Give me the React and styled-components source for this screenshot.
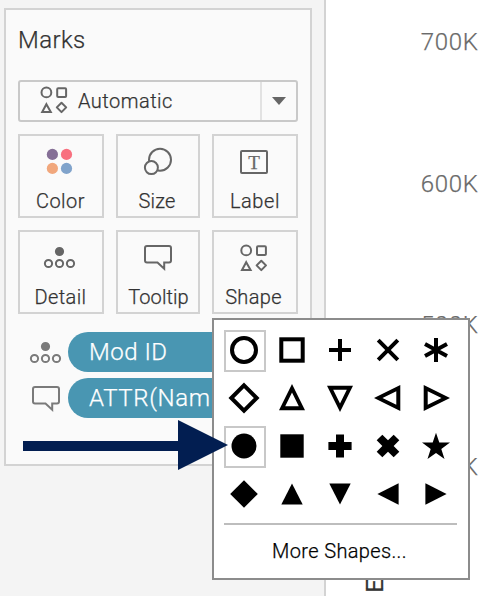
import React from "react";
import styled, { createGlobalStyle } from "styled-components";

const GlobalStyle = createGlobalStyle`
  *, *::before, *::after { box-sizing: border-box; }
  body { margin: 0; background: #fff; overflow: hidden; }
  button { font: inherit; color: inherit; background: none; padding: 0; margin: 0; border: 0; }
`;

const Page = styled.div`
  position: relative;
  display: flex;
  width: 481px;
  height: 596px;
  overflow: hidden;
  background: #fff;
  color: #323232;
  font-family: Roboto, "Liberation Sans", sans-serif;
  font-size: 20px;
  font-weight: 300;
  -webkit-text-stroke-width: 0.25px;
`;

const Sidebar = styled.aside`
  flex: none;
  width: 326px;
  padding: 8px 12px 0 4px;
  background: #f4f4f4;
  border-right: 2px solid #d3d3d3;
`;

const Card = styled.section`
  display: flex;
  flex-direction: column;
  width: 308px;
  height: 458px;
  padding: 14px 12px 0;
  border: 2px solid #d3d3d3;
  background: #fafafa;
`;

const Title = styled.h1`
  margin: 0 0 24px;
  font-size: 24px;
  font-weight: 300;
  line-height: 32px;
  letter-spacing: 0.4px;
`;

const Select = styled.button`
  display: flex;
  align-items: stretch;
  height: 42px;
  border: 2px solid #c9c9c9;
  border-radius: 3px;
  line-height: 38px;
  letter-spacing: 0.48px;
  text-align: left;
`;

const SelectValue = styled.span`
  display: flex;
  flex: 1;
  gap: 10px;
  padding-left: 20px;

  svg { margin-top: 4px; }
`;

const SelectArrow = styled.span`
  display: flex;
  align-items: center;
  justify-content: center;
  width: 36px;
  border-left: 2px solid #e2e2e2;
`;

const ButtonGrid = styled.div`
  display: grid;
  grid-template-columns: 86px 84px 86px;
  gap: 12px;
  margin-top: 12px;
`;

const MarkButton = styled.button`
  display: flex;
  flex-direction: column;
  align-items: center;
  height: 84px;
  padding-top: 12px;
  border: 2px solid #d3d3d3;
`;

const MarkLabel = styled.span`
  margin: 13px ${(p) => p.$nudge}px 0 0;
  line-height: 24px;
  letter-spacing: ${(p) => p.$spacing}px;
  white-space: nowrap;
`;

const Icon = styled.svg`
  display: block;
  flex: none;
  overflow: visible;
  fill: none;
  stroke: ${(p) => p.$color || "#666"};
  stroke-width: 2;
`;

const TextIcon = styled.span`
  display: block;
  width: 28px;
  height: 24px;
  margin: 2px 2px 2px 0;
  border: 2px solid #666;
  border-radius: 2px;
  color: #666;
  font: 19px/21px "Liberation Serif", serif;
  text-align: center;
`;

const PillList = styled.div`
  display: flex;
  flex-direction: column;
  gap: 6px;
  margin-top: 18px;
`;

const PillRow = styled.div`
  display: flex;
  padding-left: 14px;
  gap: 8px;

  svg { margin-top: 7px; }
`;

const Pill = styled.div`
  flex: 1;
  height: 40px;
  padding-left: 21px;
  border-radius: 20px;
  background: #4996b2;
  color: #fff;
  font-size: 24px;
  line-height: 40px;
  letter-spacing: ${(p) => p.$spacing}px;
  white-space: nowrap;
`;

const Chart = styled.main`
  position: relative;
  flex: 1;
`;

const Axis = styled.div`
  display: flex;
  flex-direction: column;
  gap: 109.5px;
  padding: 26px 3px 0 0;
  text-align: right;
`;

const Tick = styled.span`
  color: #6a6a6a;
  font-size: 24px;
  line-height: 32px;
  letter-spacing: 0.7px;
  margin-right: -0.7px;
`;

const AxisTitle = styled.span`
  position: absolute;
  left: 35px;
  bottom: 3px;
  color: #333;
  font-size: 24px;
  font-weight: 400;
  line-height: 28px;
  writing-mode: vertical-rl;
  transform: rotate(180deg);
`;

const Popup = styled.div`
  position: absolute;
  left: 212px;
  top: 318px;
  width: 258px;
  height: 262px;
  padding: 10px;
  border: 2px solid #8c8c8c;
  background: #fff;
  color: #000;
`;

const ShapeGrid = styled.div`
  display: grid;
  grid-template-columns: repeat(5, 42px);
  gap: 6px;
`;

const ShapeCell = styled.button`
  width: 42px;
  height: 42px;
  border: 2px solid ${(p) => (p.$selected ? "#c8c8c8" : "transparent")};
`;

const Glyph = styled.svg`
  display: block;
  width: 38px;
  height: 38px;
  fill: ${(p) => (p.$line ? "none" : "#000")};
  stroke: ${(p) => (p.$line ? "#000" : "none")};
  stroke-width: 4;
  fill-rule: evenodd;
`;

const Divider = styled.hr`
  width: 233px;
  height: 2px;
  margin: 7px 0 0;
  border: 0;
  background: #bdbdbd;
`;

const MoreShapes = styled.button`
  display: block;
  width: 231px;
  margin-top: 14px;
  line-height: 24px;
  letter-spacing: 0.36px;
`;

const Arrow = styled.svg`
  position: absolute;
  left: 23px;
  top: 420px;
  fill: #021e51;
`;

const ShapesIcon = ({ inset = 0 }) => (
  <Icon width="28" height="28" viewBox={`${inset} 0 28 28`}>
    <circle cx="6.4" cy="6.4" r="4.9" />
    <rect x="17.2" y="2.2" width="8.9" height="8.9" rx="1" />
    <path d="M6.4 18.2 L10.8 26.1 H2.2 Z" />
    <path d="M21.5 16.7 L26.2 21.4 L21.5 26.1 L16.8 21.4 Z" strokeLinejoin="round" />
  </Icon>
);

const ColorIcon = () => (
  <Icon width="28" height="28" viewBox="0 0 28 28" $color="none">
    <circle cx="5.4" cy="6.4" r="5.6" fill="#856f96" />
    <circle cx="19.5" cy="6.4" r="5.6" fill="#f8707f" />
    <circle cx="5.4" cy="20.4" r="5.6" fill="#f1a77c" />
    <circle cx="19.5" cy="20.4" r="5.6" fill="#80a3cb" />
  </Icon>
);

const SizeIcon = () => (
  <Icon width="28" height="28" viewBox="0 0 28 28">
    <circle cx="16" cy="11.8" r="11" />
    <circle cx="7.4" cy="19.6" r="6.5" fill="#fafafa" />
  </Icon>
);

const DetailIcon = ({ color, inset = 0 }) => (
  <Icon width="28" height="28" viewBox={`${inset} 0 28 28`} $color={color}>
    <circle cx="12.5" cy="7.5" r="3.6" fill={color || "#666"} />
    <circle cx="1.5" cy="19.5" r="3.6" />
    <circle cx="12.5" cy="19.5" r="3.6" />
    <circle cx="23.5" cy="19.5" r="3.6" />
  </Icon>
);

const TooltipIcon = ({ color }) => (
  <Icon width="28" height="28" viewBox="0 0 28 28" $color={color}>
    <path d="M3 2 H25 Q27 2 27 4 V16.5 Q27 18.5 25 18.5 H20.2 V24.8 L13.5 18.5 H3 Q1 18.5 1 16.5 V4 Q1 2 3 2 Z" />
  </Icon>
);

const MARKS = [
  { label: "Color", spacing: 0.5, nudge: 1, icon: <ColorIcon /> },
  { label: "Size", spacing: 0.2, nudge: 2, icon: <SizeIcon /> },
  { label: "Label", spacing: 0.6, nudge: 0, icon: <TextIcon>T</TextIcon> },
  { label: "Detail", spacing: 0.4, nudge: 1, icon: <DetailIcon /> },
  { label: "Tooltip", spacing: 0.1, nudge: -1, icon: <TooltipIcon /> },
  { label: "Shape", spacing: 0.35, nudge: 3, icon: <ShapesIcon inset={1.2} /> },
];

const PLUS = "M-4 -11.6 H4 V-4 H11.6 V4 H4 V11.6 H-4 V4 H-11.6 V-4 H-4 Z";
const THICK_X = "M-4 -12 H4 V-4 H12 V4 H4 V12 H-4 V4 H-12 V-4 H-4 Z";
const TRIANGLE = "M0 -14 L13 12.3 H-13 Z M0 -5.5 L-6.8 8.3 H6.8 Z";

const SHAPES = [
  { name: "circle", line: true, selected: true, art: <circle r="12" /> },
  { name: "square", line: true, art: <rect x="-10.7" y="-10.7" width="21.4" height="21.4" /> },
  { name: "plus", line: true, art: <path d="M-11 0 H11 M0 -11 V11" /> },
  { name: "times", line: true, art: <path d="M-9.8 -9.8 L9.8 9.8 M9.8 -9.8 L-9.8 9.8" /> },
  { name: "asterisk", line: true, art: <path d="M0 -12 V12 M-11 -6 L11 6 M11 -6 L-11 6" /> },
  { name: "diamond", line: true, art: <path d="M0 -12.7 L12.7 0 L0 12.7 L-12.7 0 Z" /> },
  { name: "triangle up", art: <path d={TRIANGLE} /> },
  { name: "triangle down", art: <path d={TRIANGLE} transform="rotate(180)" /> },
  { name: "triangle left", art: <path d={TRIANGLE} transform="rotate(-90)" /> },
  { name: "triangle right", art: <path d={TRIANGLE} transform="rotate(90)" /> },
  { name: "filled circle", selected: true, art: <circle r="12.5" /> },
  { name: "filled square", art: <rect x="-11.7" y="-11.7" width="23.4" height="23.4" /> },
  { name: "filled plus", art: <path d={PLUS} /> },
  { name: "filled times", art: <path d={THICK_X} transform="rotate(45)" /> },
  {
    name: "star",
    art: <path d="M0 -13.2 L3.3 -3.5 L14 -3.4 L5.3 2.9 L8.5 13 L0 6.9 L-8.5 13 L-5.3 2.9 L-14 -3.4 L-3.3 -3.5 Z" />,
  },
  { name: "filled diamond", art: <path d="M0 -13.8 L13.8 0 L0 13.8 L-13.8 0 Z" /> },
  { name: "filled triangle up", art: <path d="M0 -10.6 L10.7 10.6 H-10.7 Z" /> },
  { name: "filled triangle down", art: <path d="M0 10.6 L10.7 -10.6 H-10.7 Z" /> },
  { name: "filled triangle left", art: <path d="M-10.6 0 L10.6 -10.7 V10.7 Z" /> },
  { name: "filled triangle right", art: <path d="M10.6 0 L-10.6 -10.7 V10.7 Z" /> },
];

export default function App() {
  return (
    <>
      <GlobalStyle />
      <Page>
        <Sidebar>
          <Card>
            <Title>Marks</Title>
            <Select>
              <SelectValue>
                <ShapesIcon />
                Automatic
              </SelectValue>
              <SelectArrow>
                <svg width="14" height="8" viewBox="0 0 14 8">
                  <path d="M0 0 H14 L7 8 Z" fill="#666" />
                </svg>
              </SelectArrow>
            </Select>
            <ButtonGrid>
              {MARKS.map((m) => (
                <MarkButton key={m.label}>
                  {m.icon}
                  <MarkLabel $spacing={m.spacing} $nudge={m.nudge}>{m.label}</MarkLabel>
                </MarkButton>
              ))}
            </ButtonGrid>
            <PillList>
              <PillRow>
                <DetailIcon color="#7a7a7a" inset={-1} />
                <Pill $spacing={0.5}>Mod ID</Pill>
              </PillRow>
              <PillRow>
                <TooltipIcon color="#7a7a7a" />
                <Pill $spacing={0.65}>ATTR(Nam</Pill>
              </PillRow>
            </PillList>
          </Card>
        </Sidebar>
        <Chart>
          <Axis>
            <Tick>700K</Tick>
            <Tick>600K</Tick>
            <Tick>500K</Tick>
            <Tick>400K</Tick>
          </Axis>
          <AxisTitle>E</AxisTitle>
        </Chart>
        <Popup>
          <ShapeGrid>
            {SHAPES.map((s) => (
              <ShapeCell key={s.name} aria-label={s.name} $selected={s.selected}>
                <Glyph viewBox="-18 -18 38 38" $line={s.line}>
                  {s.art}
                </Glyph>
              </ShapeCell>
            ))}
          </ShapeGrid>
          <Divider />
          <MoreShapes>More Shapes...</MoreShapes>
        </Popup>
        <Arrow width="205" height="50" viewBox="0 0 205 50">
          <path d="M0 21 H155 V0 L205 25 L155 50 V31 H0 Z" />
        </Arrow>
      </Page>
    </>
  );
}
